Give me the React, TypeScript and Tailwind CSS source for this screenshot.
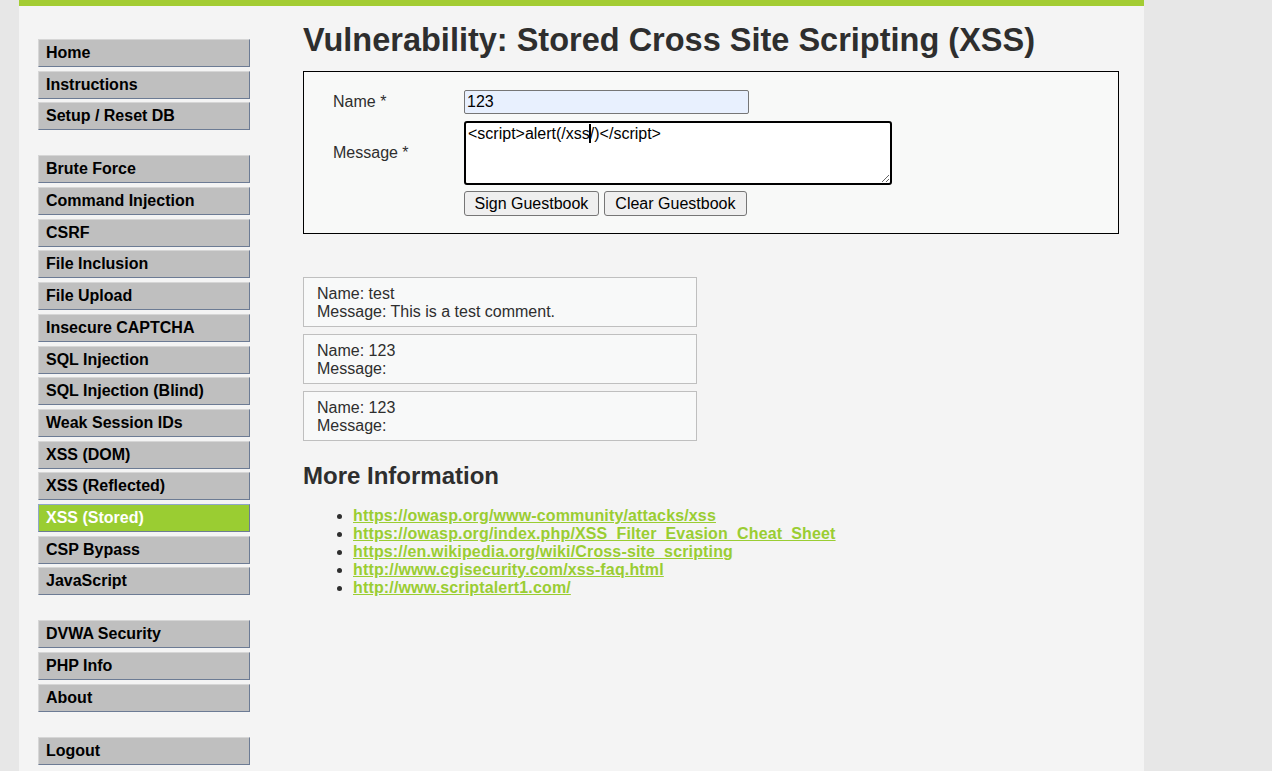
import React from 'react';

const groups: string[][] = [
  ['Home', 'Instructions', 'Setup / Reset DB'],
  [
    'Brute Force',
    'Command Injection',
    'CSRF',
    'File Inclusion',
    'File Upload',
    'Insecure CAPTCHA',
    'SQL Injection',
    'SQL Injection (Blind)',
    'Weak Session IDs',
    'XSS (DOM)',
    'XSS (Reflected)',
    'XSS (Stored)',
    'CSP Bypass',
    'JavaScript',
  ],
  ['DVWA Security', 'PHP Info', 'About'],
  ['Logout'],
];

const entries = [
  { name: 'test', message: 'This is a test comment.' },
  { name: '123', message: '' },
  { name: '123', message: '' },
];

const links = [
  'https://owasp.org/www-community/attacks/xss',
  'https://owasp.org/index.php/XSS_Filter_Evasion_Cheat_Sheet',
  'https://en.wikipedia.org/wiki/Cross-site_scripting',
  'http://www.cgisecurity.com/xss-faq.html',
  'http://www.scriptalert1.com/',
];

function MenuItem({ label }: { label: string }) {
  const active = label === 'XSS (Stored)';
  return (
    <a
      href="#"
      className={
        active
          ? 'block h-[28px] pl-[7px] text-base font-bold leading-[26px] text-white bg-[#9acd32] border border-t-[#8fa6c9] border-l-[#8fa6c9] border-b-[#6c7b94] border-r-[#6c7b94]'
          : 'block h-[28px] pl-[7px] text-base font-bold leading-[26px] text-black bg-[#bfbfbf] border border-t-[#d6d6d6] border-l-[#d6d6d6] border-b-[#6c7b94] border-r-[#6c7b94]'
      }
    >
      {label}
    </a>
  );
}

export default function App() {
  return (
    <div className="min-h-screen bg-[#e7e7e7] font-['Liberation_Sans',Arial,sans-serif] text-[#2e2e2e]">
      <div className="ml-[19px] w-[1125px] min-h-screen bg-[#f4f4f4] border-t-[6px] border-[#a3cc33]">
        <div className="flex">
          {/* Side menu */}
          <nav className="ml-[19px] mt-[33px] w-[212px] flex flex-col gap-[25px]">
            {groups.map((g, i) => (
              <div key={i} className="flex flex-col gap-[3.7px]">
                {g.map((label) => (
                  <MenuItem key={label} label={label} />
                ))}
              </div>
            ))}
          </nav>

          {/* Main body */}
          <main className="ml-[53px] w-[816px]">
            <h1 className="mt-[16px] mb-[12px] text-[32.5px] font-bold leading-[37px] text-[#2e2e2e]">
              Vulnerability: Stored Cross Site Scripting (XSS)
            </h1>

            <div className="border border-black bg-[#f8f9f8] pt-[18px] pb-[17px] pl-[29px]">
              <div className="flex items-center">
                <span className="w-[131px] text-base">Name *</span>
                <input
                  readOnly
                  value="123"
                  className="h-[24px] w-[285px] bg-[#e8f0fe] border border-[#767676] rounded-[2px] px-[2px] text-base text-black outline-none"
                />
              </div>
              <div className="flex items-center mt-[7px]">
                <span className="w-[131px] text-base">Message *</span>
                <div className="relative">
                  <textarea
                    readOnly
                    value="<script>alert(/xss/)</script>"
                    className="block h-[64px] w-[428px] bg-white border-2 border-black rounded-[3px] px-[2px] py-[1px] text-base leading-[19px] text-black outline-none font-['Liberation_Sans',Arial,sans-serif]"
                  />
                  <span className="absolute left-[125px] top-[3px] w-[2px] h-[19px] bg-black" />
                </div>
              </div>
              <div className="flex mt-[6px] ml-[131px] gap-[5px]">
                <button className="h-[25px] px-[9.5px] bg-[#efefef] border border-[#767676] rounded-[3px] text-base text-black">
                  Sign Guestbook
                </button>
                <button className="h-[25px] px-[10.5px] bg-[#efefef] border border-[#767676] rounded-[3px] text-base text-black">
                  Clear Guestbook
                </button>
              </div>
            </div>

            <div className="mt-[43px] flex flex-col gap-[7px]">
              {entries.map((e, i) => (
                <div
                  key={i}
                  className="w-[394px] h-[50px] border border-[#bfbfbf] bg-[#f8f9f9] pl-[13px] pt-[7px] text-base leading-[18px]"
                >
                  <div>Name: {e.name}</div>
                  <div>Message: {e.message}</div>
                </div>
              ))}
            </div>

            <h2 className="mt-[21px] text-2xl font-bold leading-[28px] text-[#2e2e2e]">More Information</h2>
            <ul className="mt-[17px] pl-[50px] list-disc text-base leading-[18px]">
              {links.map((l) => (
                <li key={l}>
                  <a href="#" className="font-bold underline tracking-[0.15px] text-[#9acd32]">
                    {l}
                  </a>
                </li>
              ))}
            </ul>
          </main>
        </div>
      </div>
    </div>
  );
}
